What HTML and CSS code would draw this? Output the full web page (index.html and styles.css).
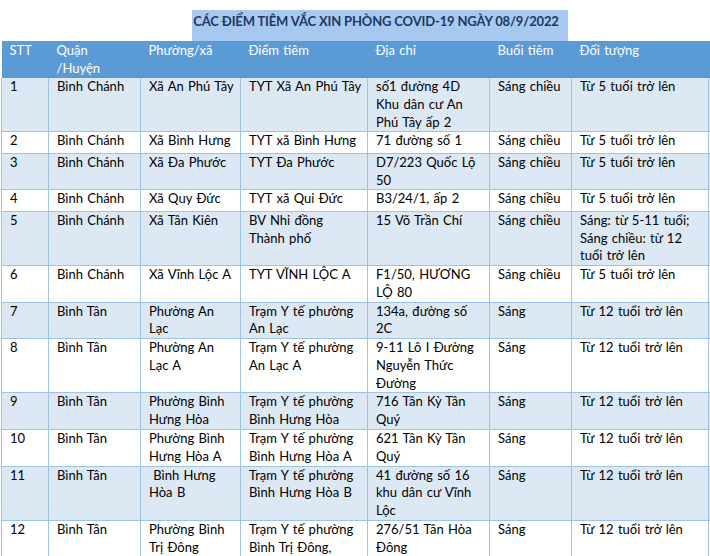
FILE: index.html
```html
<!DOCTYPE html>
<html lang="vi">
<head>
<meta charset="utf-8">
<title>Các điểm tiêm vắc xin phòng COVID-19</title>
<link rel="stylesheet" href="styles.css">
</head>
<body>
<div class="page">
  <div class="title">CÁC ĐIỂM TIÊM VẮC XIN PHÒNG COVID-19 NGÀY 08/9/2022</div>
  <table class="grid">
    <colgroup>
      <col class="c-stt"><col class="c-quan"><col class="c-phuong"><col class="c-diem"><col class="c-dc"><col class="c-buoi"><col class="c-dt"><col class="c-extra">
    </colgroup>
    <thead>
      <tr><th>STT</th><th>Quận<br>/Huyện</th><th>Phường/xã</th><th>Điểm tiêm</th><th>Địa chỉ</th><th>Buổi tiêm</th><th>Đối tượng</th><th></th></tr>
    </thead>
    <tbody>
      <tr class="alt"><td>1</td><td>Bình Chánh</td><td>Xã An Phú Tây</td><td>TYT Xã An Phú Tây</td><td>số1 đường 4D<br>Khu dân cư An<br>Phú Tây ấp 2</td><td>Sáng chiều</td><td>Từ 5 tuổi trở lên</td><td></td></tr>
      <tr class="one"><td>2</td><td>Bình Chánh</td><td>Xã Bình Hưng</td><td>TYT xã Bình Hưng</td><td>71 đường số 1</td><td>Sáng chiều</td><td>Từ 5 tuổi trở lên</td><td></td></tr>
      <tr class="alt"><td>3</td><td>Bình Chánh</td><td>Xã Đa Phước</td><td>TYT Đa Phước</td><td>D7/223 Quốc Lộ<br>50</td><td>Sáng chiều</td><td>Từ 5 tuổi trở lên</td><td></td></tr>
      <tr class="one"><td>4</td><td>Bình Chánh</td><td>Xã Quy Đức</td><td>TYT xã Qui Đức</td><td>B3/24/1, ấp 2</td><td>Sáng chiều</td><td>Từ 5 tuổi trở lên</td><td></td></tr>
      <tr class="alt"><td>5</td><td>Bình Chánh</td><td>Xã Tân Kiên</td><td>BV Nhi đồng<br>Thành phố</td><td>15 Võ Trần Chí</td><td>Sáng chiều</td><td>Sáng: từ 5-11 tuổi;<br>Sáng chiều: từ 12<br>tuổi trở lên</td><td></td></tr>
      <tr><td>6</td><td>Bình Chánh</td><td>Xã Vĩnh Lộc A</td><td>TYT VĨNH LỘC A</td><td>F1/50, HƯƠNG<br>LỘ 80</td><td>Sáng chiều</td><td>Từ 5 tuổi trở lên</td><td></td></tr>
      <tr class="alt"><td>7</td><td>Bình Tân</td><td>Phường An<br>Lạc</td><td>Trạm Y tế phường<br>An Lạc</td><td>134a, đường số<br>2C</td><td>Sáng</td><td>Từ 12 tuổi trở lên</td><td></td></tr>
      <tr><td>8</td><td>Bình Tân</td><td>Phường An<br>Lạc A</td><td>Trạm Y tế phường<br>An Lạc A</td><td>9-11 Lô I Đường<br>Nguyễn Thức<br>Đường</td><td>Sáng</td><td>Từ 12 tuổi trở lên</td><td></td></tr>
      <tr class="alt"><td>9</td><td>Bình Tân</td><td>Phường Bình<br>Hưng Hòa</td><td>Trạm Y tế phường<br>Bình Hưng Hòa</td><td>716 Tân Kỳ Tân<br>Quý</td><td>Sáng</td><td>Từ 12 tuổi trở lên</td><td></td></tr>
      <tr><td>10</td><td>Bình Tân</td><td>Phường Bình<br>Hưng Hòa A</td><td>Trạm Y tế phường<br>Bình Hưng Hòa A</td><td>621 Tân Kỳ Tân<br>Quý</td><td>Sáng</td><td>Từ 12 tuổi trở lên</td><td></td></tr>
      <tr class="alt"><td>11</td><td>Bình Tân</td><td>&nbsp;Bình Hưng<br>Hòa B</td><td>Trạm Y tế phường<br>Bình Hưng Hòa B</td><td>41 đường số 16<br>khu dân cư Vĩnh<br>Lộc</td><td>Sáng</td><td>Từ 12 tuổi trở lên</td><td></td></tr>
      <tr><td>12</td><td>Bình Tân</td><td>Phường Bình<br>Trị Đông</td><td>Trạm Y tế phường<br>Bình Trị Đông,</td><td>276/51 Tân Hòa<br>Đông</td><td>Sáng</td><td>Từ 12 tuổi trở lên</td><td></td></tr>
    </tbody>
  </table>
</div>
</body>
</html>
```

FILE: styles.css
```css
html, body {
  margin: 0;
  padding: 0;
  background: #ffffff;
  overflow: hidden;
}
.page {
  width: 710px;
  height: 556px;
  overflow: hidden;
  font-family: Lato, "Liberation Sans", sans-serif;
  font-size: 13px;
  color: #000000;
}
.title {
  margin: 10px 0 0 192px;
  width: 376px;
  height: 31px;
  box-sizing: border-box;
  padding: 2px 8px 0 0;
  background: #a7c9ef;
  color: #1f3864;
  font-weight: 700;
  font-size: 13px;
  line-height: 18px;
  letter-spacing: -0.15px;
  text-align: center;
  white-space: nowrap;
}
.grid {
  margin-left: 1px;
  border-collapse: collapse;
  table-layout: fixed;
  width: 730px;
  word-spacing: 1px;
}
.c-stt { width: 47px; }
.c-quan { width: 92px; }
.c-phuong { width: 100px; }
.c-diem { width: 127px; }
.c-dc { width: 122px; }
.c-buoi { width: 82px; }
.c-dt { width: 137px; }
.c-extra { width: 23px; }
.grid th {
  background: #5b9bd5;
  color: #ffffff;
  font-weight: 400;
  text-align: left;
  vertical-align: top;
  padding: 0 2px 0 8px;
  line-height: 18px;
  height: 37px;
  box-sizing: border-box;
  white-space: nowrap;
}
.grid td {
  vertical-align: top;
  text-align: left;
  padding: 0 2px 0 8px;
  line-height: 17.77px;
  border: 1px solid #9dc3e6;
  background: #ffffff;
  white-space: nowrap;
}
.grid tbody tr:first-child td {
  border-top: 0;
}
.grid tr.alt td {
  background: #dde8f5;
}
.grid tr.one td {
  height: 21.5px;
  box-sizing: border-box;
}
```
